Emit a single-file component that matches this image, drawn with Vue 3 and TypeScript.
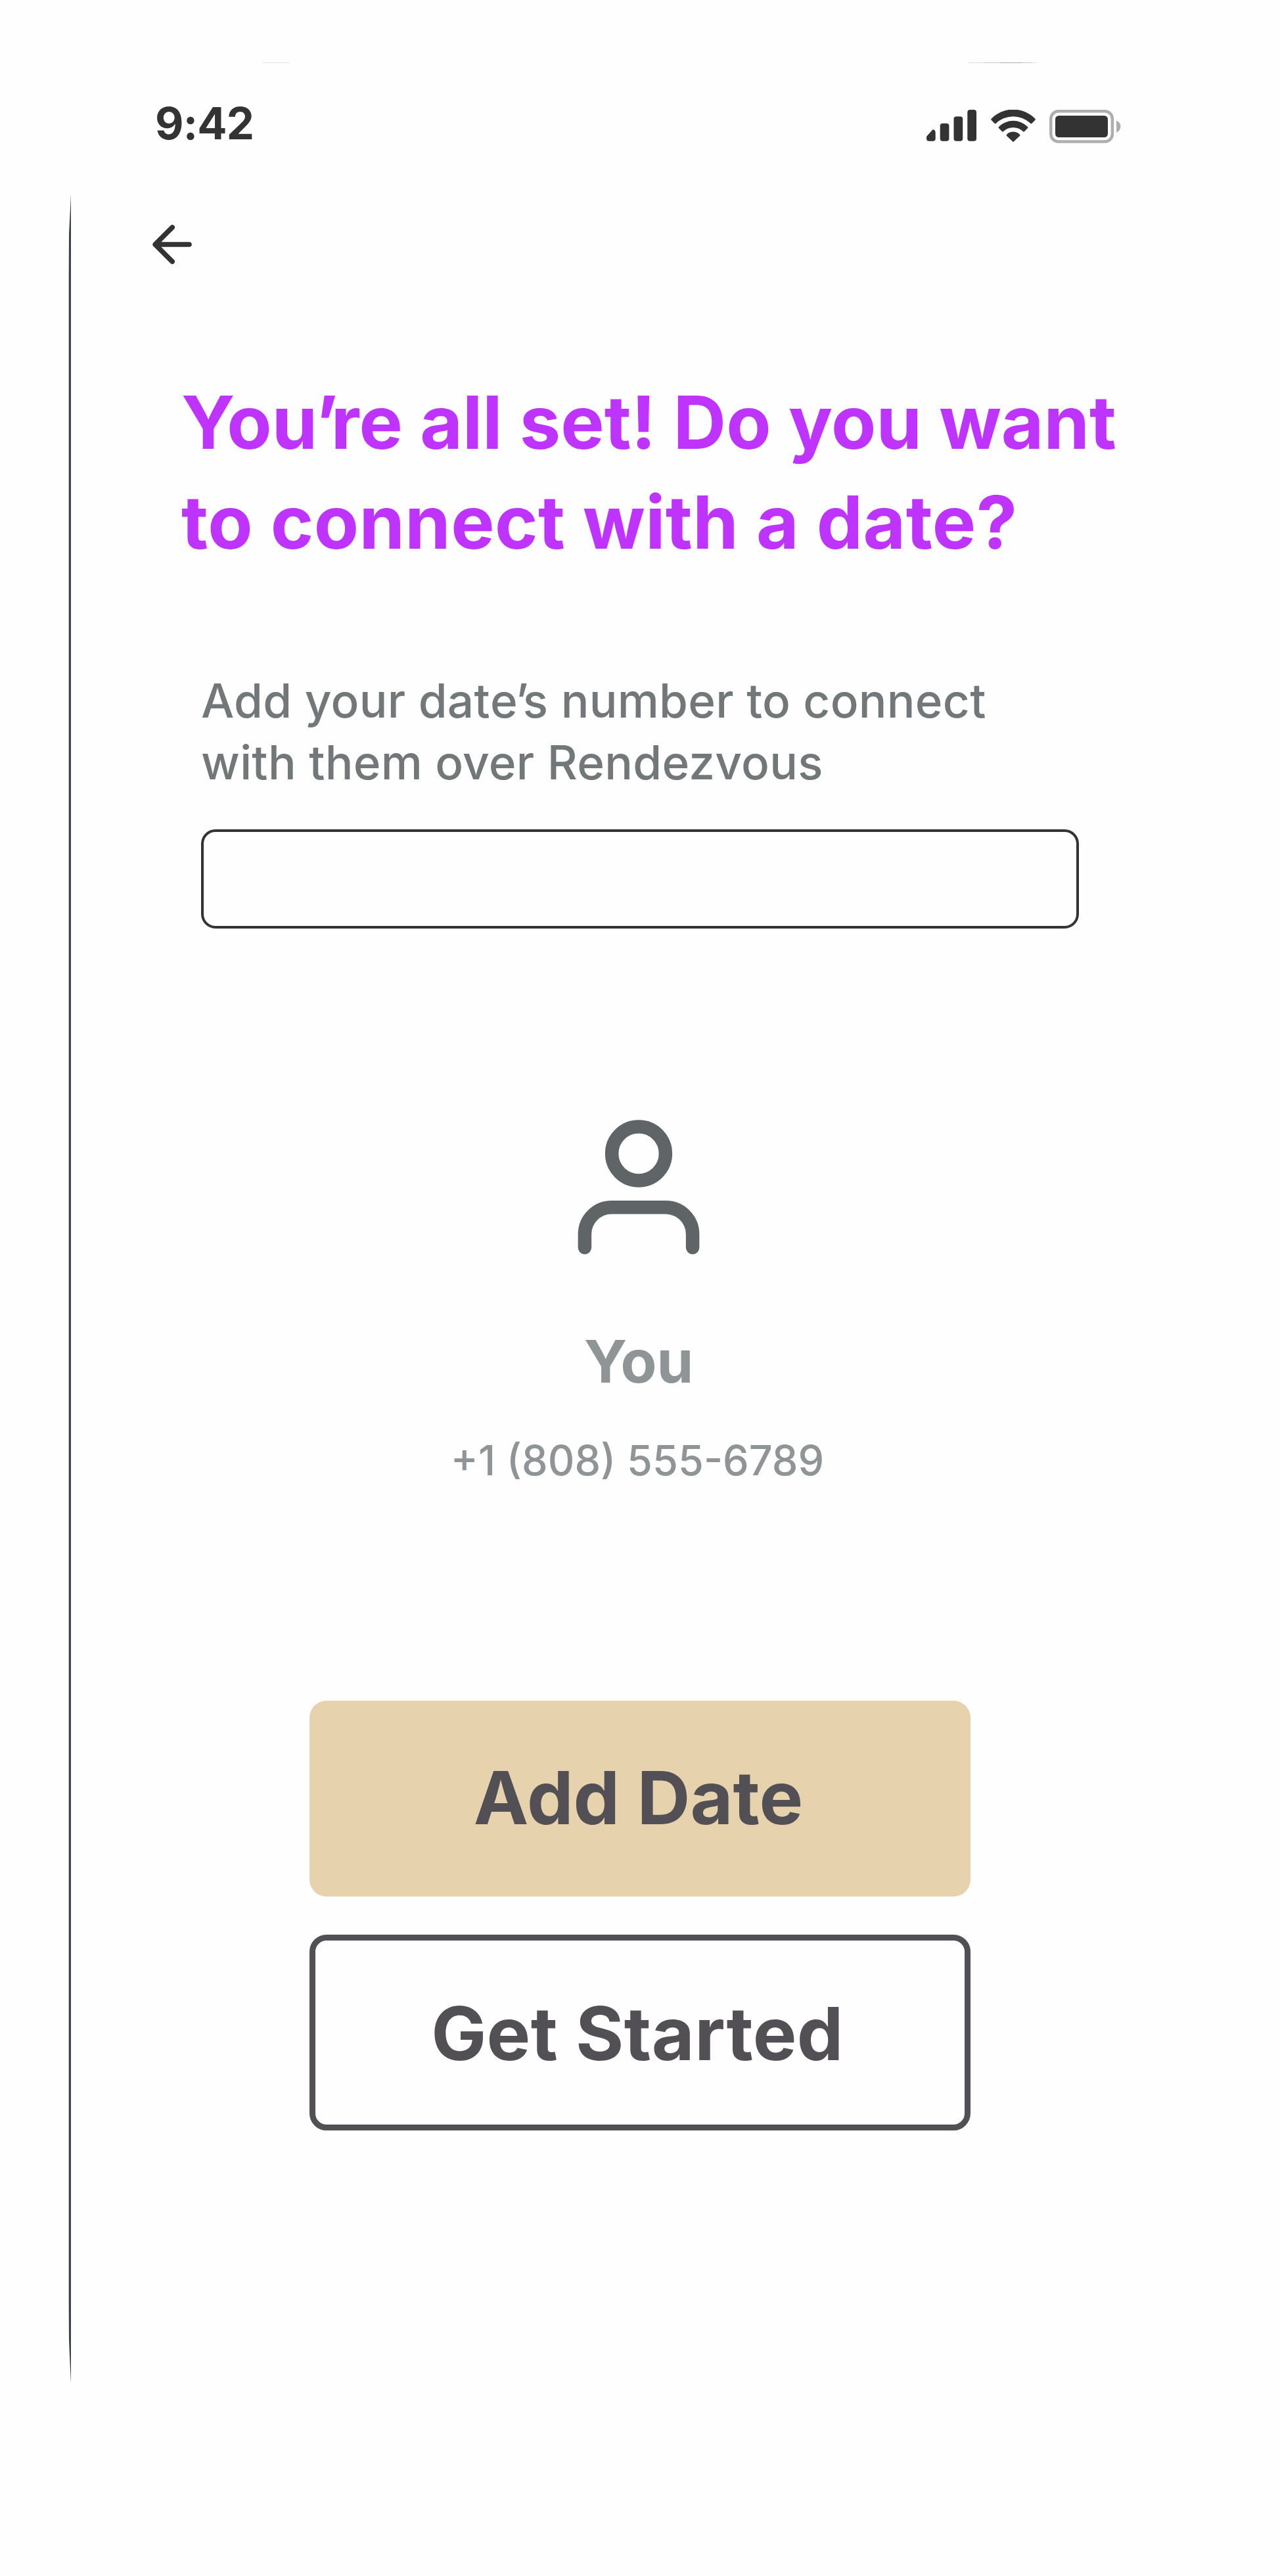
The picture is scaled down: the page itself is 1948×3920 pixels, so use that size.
<script setup lang="ts">
import { ref } from 'vue'

interface Bar {
  x: number
  y: number
}

const time = '9:42'
const dateNumber = ref('')
const contact = { name: 'You', phone: '+1 (808) 555-6789' }
const bars: Bar[] = [
  { x: 20.7, y: 20.7 },
  { x: 41.5, y: 10.3 },
  { x: 62.3, y: 0 },
]
</script>

<template>
  <main class="screen">
    <svg class="frame" viewBox="0 0 1948 3920" aria-hidden="true">
      <path d="M108 295C107.4 310 106 335 105 356L104.7 420V3510L105 3560C106 3590 107.4 3612 108 3627Z" fill="#3d424c" />
      <rect x="399" y="95" width="42.5" height="1" fill="#e4e4e4" />
      <rect x="1474" y="95" width="104" height="1" fill="#dedede" />
      <rect x="1497" y="95" width="73" height="1" fill="#c6c6c6" />
      <rect x="1522" y="95" width="33" height="1" fill="#adadad" />
    </svg>

    <header class="status">
      <span class="time">{{ time }}</span>
      <div class="indicators">
        <svg class="signal" width="76" height="48" viewBox="0 0 76 48">
          <path d="M0 40.7L9.2 30.4C11.5 29.6 13.7 31.5 13.7 35V43.7Q13.7 47.7 9.7 47.7H4Q0 47.7 0 43.7Z" fill="#333" />
          <rect v-for="b in bars" :key="b.x" :x="b.x" :y="b.y" width="13.7" :height="47.7 - b.y" rx="4" fill="#333" />
        </svg>
        <svg class="wifi" width="68" height="50" viewBox="0 0 204 150" fill="#333">
          <path d="M2 41A139 139 0 0 1 202 41Q205 44 202 47L187 62Q184 65 181 62A115 115 0 0 0 23 62Q20 65 17 62L2 47Q-1 44 2 41Z" />
          <path d="M36 78A93 93 0 0 1 168 78Q171 81 168 84L153 99Q150 102 147 99A65 65 0 0 0 57 99Q54 102 51 99L36 84Q33 81 36 78Z" />
          <path d="M72 113A42 42 0 0 1 132 113Q135 116 132 119L105 145Q102 148 99 145L72 119Q69 116 72 113Z" />
        </svg>
        <svg class="battery" width="110" height="52" viewBox="0 0 110 52">
          <rect x="2.3" y="2.3" width="93.6" height="46.2" rx="11.5" fill="none" stroke="#aeaeae" stroke-width="4.5" />
          <rect x="9" y="9" width="80" height="33" rx="5.5" fill="#333" />
          <path d="M102 16.6C106 18.3 108.4 21.6 108.4 25.6C108.4 29.6 106 33 102 34.7Z" fill="#aeaeae" />
        </svg>
      </div>
    </header>

    <nav class="nav">
      <button class="back" type="button" aria-label="Back">
        <svg width="64" height="64" viewBox="0 0 64 64" fill="none" stroke="#333" stroke-width="7.6" stroke-linecap="round" stroke-linejoin="round">
          <path d="M58 32H6.2M32.2 6L6.2 32L32.2 58" />
        </svg>
      </button>
    </nav>

    <h1 class="title">Yo<span class="tight-before">u</span><span class="tight-after">’</span>re all set! Do you want<br /><span class="loose">to connect with a date?</span></h1>

    <label class="field">
      <span class="hint">Add your dat<span class="tight-e">e</span><span class="tight">’</span>s number to connect<br />with them over Rendezvous</span>
      <input v-model="dateNumber" class="input" type="tel" />
    </label>

    <section class="person">
      <svg class="avatar" width="186" height="206" viewBox="0 0 186 206" fill="none" stroke="#5f6567" stroke-width="20.5" stroke-linecap="round">
        <circle cx="93" cy="51.5" r="40.9" />
        <path d="M10.9 194.6V174.2A40.9 40.9 0 0 1 51.8 133.3H134.2A40.9 40.9 0 0 1 175.1 174.2V194.6" />
      </svg>
      <span class="name">{{ contact.name }}</span>
      <span class="phone">{{ contact.phone }}</span>
    </section>

    <div class="actions">
      <button class="btn primary" type="button">Add Date</button>
      <button class="btn outline" type="button">Get Started</button>
    </div>
  </main>
</template>

<style>
body {
  margin: 0;
  background: #fefefe;
}
</style>

<style scoped>
.screen {
  position: relative;
  box-sizing: border-box;
  width: 1948px;
  height: 3920px;
  padding-top: 147px;
  display: flex;
  flex-direction: column;
  background: #fefefe;
  font-family: Inter, "Liberation Sans", sans-serif;
}
.frame {
  position: absolute;
  inset: 0;
  width: 1948px;
  height: 3920px;
  pointer-events: none;
}
svg {
  display: block;
}
.status {
  height: 80px;
  padding: 0 241px 0 236px;
  display: flex;
  justify-content: space-between;
}
.time {
  font-size: 67px;
  line-height: 81px;
  font-weight: 700;
  letter-spacing: -0.8px;
  color: #333;
}
.indicators {
  display: flex;
  align-items: flex-start;
  padding-top: 20px;
}
.wifi {
  margin-left: 22px;
}
.battery {
  margin-left: 21px;
}
.nav {
  margin: 113px 0 0 230px;
  height: 64px;
}
.back {
  display: block;
  width: 64px;
  height: 64px;
  padding: 0;
  border: 0;
  background: none;
}
.title {
  margin: 163px 0 0 276px;
  font-size: 111.5px;
  line-height: 151.7px;
  font-weight: 700;
  color: #bf33ff;
  white-space: nowrap;
}
.tight-before {
  letter-spacing: -3px;
}
.tight-after {
  letter-spacing: -11px;
}
.loose {
  letter-spacing: 0.4px;
}
.field {
  margin: 150px 0 0 306px;
  width: 1336px;
  display: flex;
  flex-direction: column;
}
.hint {
  font-size: 71px;
  line-height: 93.4px;
  font-weight: 500;
  letter-spacing: 0.3px;
  color: #72777a;
  white-space: nowrap;
}
.tight-e {
  letter-spacing: -3px;
}
.tight {
  letter-spacing: -8.5px;
}
.input {
  box-sizing: border-box;
  width: 1336px;
  height: 151px;
  margin: 55px 0 0;
  padding: 0 40px;
  border: 4px solid #333;
  border-radius: 22px;
  background: transparent;
  font: 500 71px Inter, sans-serif;
  outline: none;
}
.person {
  margin-top: 291px;
  display: flex;
  flex-direction: column;
  align-items: center;
}
.avatar {
  margin-right: 4px;
}
.name {
  margin-top: 107px;
  margin-right: 4px;
  font-size: 89.7px;
  line-height: 110px;
  font-weight: 700;
  color: #8f9597;
}
.phone {
  margin-top: 57px;
  margin-right: 8px;
  font-size: 63px;
  line-height: 76px;
  font-weight: 500;
  color: #8f9597;
}
.actions {
  margin: 328px 0 0 471px;
  width: 1006px;
  display: flex;
  flex-direction: column;
  gap: 58px;
}
.btn {
  box-sizing: border-box;
  height: 298px;
  border: 0;
  border-radius: 26px;
  font: 700 112px/136px Inter, sans-serif;
  color: #535055;
}
.primary {
  padding: 0 5px 5px 0;
  background: #e6d2ac;
}
.outline {
  padding: 2px 8px 0 0;
  background: transparent;
  border: 9px solid #535055;
  letter-spacing: 0.4px;
}
</style>
